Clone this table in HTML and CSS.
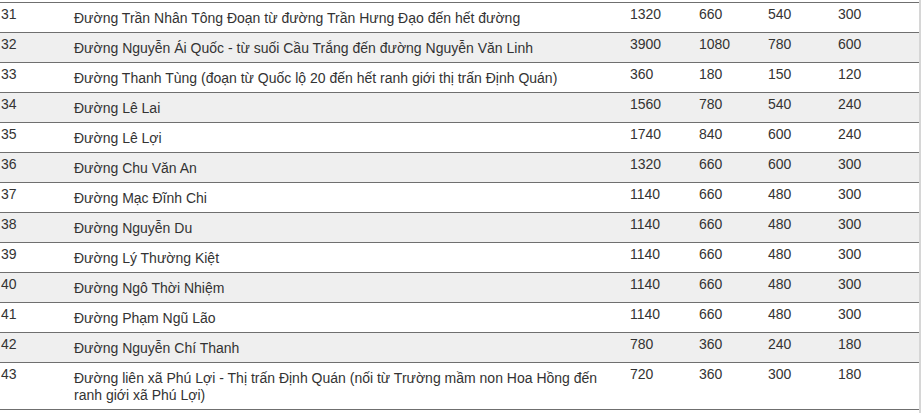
FILE: index.html
```html
<!DOCTYPE html>
<html lang="vi">
<head>
<meta charset="utf-8">
<link rel="stylesheet" href="styles.css">
</head>
<body>
<div class="frame">
<table class="price">
<colgroup>
<col class="c-no"><col class="c-name"><col class="c-v1"><col class="c-v2"><col class="c-v3"><col class="c-v4">
</colgroup>
<tbody>
<tr><td>31</td><td class="name">Đường Trần Nhân Tông Đoạn từ đường Trần Hưng Đạo đến hết đường</td><td>1320</td><td>660</td><td>540</td><td>300</td></tr>
<tr class="alt"><td>32</td><td class="name">Đường Nguyễn Ái Quốc - từ suối Cầu Trắng đến đường Nguyễn Văn Linh</td><td>3900</td><td>1080</td><td>780</td><td>600</td></tr>
<tr><td>33</td><td class="name">Đường Thanh Tùng (đoạn từ Quốc lộ 20 đến hết ranh giới thị trấn Định Quán)</td><td>360</td><td>180</td><td>150</td><td>120</td></tr>
<tr class="alt"><td>34</td><td class="name">Đường Lê Lai</td><td>1560</td><td>780</td><td>540</td><td>240</td></tr>
<tr><td>35</td><td class="name">Đường Lê Lợi</td><td>1740</td><td>840</td><td>600</td><td>240</td></tr>
<tr class="alt"><td>36</td><td class="name">Đường Chu Văn An</td><td>1320</td><td>660</td><td>600</td><td>300</td></tr>
<tr><td>37</td><td class="name">Đường Mạc Đĩnh Chi</td><td>1140</td><td>660</td><td>480</td><td>300</td></tr>
<tr class="alt"><td>38</td><td class="name">Đường Nguyễn Du</td><td>1140</td><td>660</td><td>480</td><td>300</td></tr>
<tr><td>39</td><td class="name">Đường Lý Thường Kiệt</td><td>1140</td><td>660</td><td>480</td><td>300</td></tr>
<tr class="alt"><td>40</td><td class="name">Đường Ngô Thời Nhiệm</td><td>1140</td><td>660</td><td>480</td><td>300</td></tr>
<tr><td>41</td><td class="name">Đường Phạm Ngũ Lão</td><td>1140</td><td>660</td><td>480</td><td>300</td></tr>
<tr class="alt"><td>42</td><td class="name">Đường Nguyễn Chí Thanh</td><td>780</td><td>360</td><td>240</td><td>180</td></tr>
<tr><td>43</td><td class="name">Đường liên xã Phú Lợi - Thị trấn Định Quán (nối từ Trường mầm non Hoa Hồng đến ranh giới xã Phú Lợi)</td><td>720</td><td>360</td><td>300</td><td>180</td></tr>
</tbody>
</table>
</div>
</body>
</html>
```
FILE: styles.css
```css
html, body {
  margin: 0;
  padding: 0;
  background: #ffffff;
}
.frame {
  width: 919px;
  padding-top: 2px;
  border-right: 2px solid #d6d6d6;
  min-height: 411px;
}
.price {
  width: 919px;
  table-layout: fixed;
  border-collapse: collapse;
  font-family: "Liberation Sans", Arial, sans-serif;
  font-size: 14px;
  line-height: 17px;
  color: #333333;
}
.c-no { width: 72px; }
.c-name { width: 556px; }
.c-v1 { width: 69px; }
.c-v2 { width: 69px; }
.c-v3 { width: 70px; }
.c-v4 { width: 83px; }
.price td {
  vertical-align: top;
  padding: 3px 2px 9px 2px;
  border-top: 1px solid #6f6f6f;
  border-bottom: 1px solid #6f6f6f;
}
.price td:first-child {
  padding-left: 1px;
}
.price td.name {
  padding-top: 7px;
  padding-bottom: 5px;
}
.price tr.alt td {
  background: #efefef;
}
```
